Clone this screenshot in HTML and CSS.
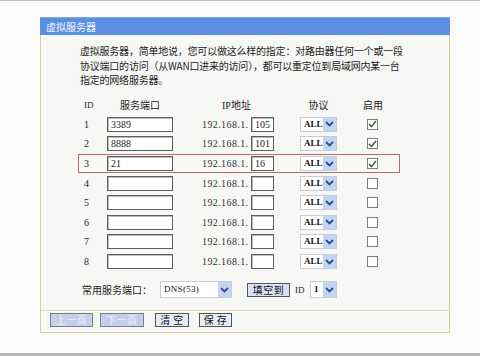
FILE: index.html
```html
<!DOCTYPE html>
<html lang="zh">
<head>
<meta charset="utf-8">
<link rel="stylesheet" href="styles.css">
</head>
<body>
<div class="page">
  <div class="panel">
    <div class="title">虚拟服务器</div>
    <div class="body">
      <p class="intro">虚拟服务器，简单地说，您可以做这么样的指定：对路由器任何一个或一段<br>协议端口的访问（从WAN口进来的访问），都可以重定位到局域网内某一台<br>指定的网络服务器。</p>
      <div class="table">
        <div class="row head">
          <span class="c-id">ID</span>
          <span class="c-port">服务端口</span>
          <span class="c-ip">IP地址</span>
          <span class="c-proto">协议</span>
          <span class="c-en">启用</span>
        </div>
        <div class="row"><span class="c-id num">1</span><span class="in port">3389</span><span class="pre">192.168.1.</span><span class="in ip">105</span><span class="sel"><span class="v">ALL</span><span class="arr"><svg width="9" height="6" viewBox="0 0 9 6"><path d="M1 1 L4.5 4.5 L8 1" fill="none" stroke="#2b4f8c" stroke-width="1.8"/></svg></span></span><span class="cb on"><svg width="9" height="8" viewBox="0 0 9 8"><path d="M1 4 L3.5 6.5 L8 1" fill="none" stroke="#3f6a3f" stroke-width="1.6"/></svg></span></div>
        <div class="row"><span class="c-id num">2</span><span class="in port">8888</span><span class="pre">192.168.1.</span><span class="in ip">101</span><span class="sel"><span class="v">ALL</span><span class="arr"><svg width="9" height="6" viewBox="0 0 9 6"><path d="M1 1 L4.5 4.5 L8 1" fill="none" stroke="#2b4f8c" stroke-width="1.8"/></svg></span></span><span class="cb on"><svg width="9" height="8" viewBox="0 0 9 8"><path d="M1 4 L3.5 6.5 L8 1" fill="none" stroke="#3f6a3f" stroke-width="1.6"/></svg></span></div>
        <div class="row mark"><span class="c-id num">3</span><span class="in port">21</span><span class="pre">192.168.1.</span><span class="in ip">16</span><span class="sel"><span class="v">ALL</span><span class="arr"><svg width="9" height="6" viewBox="0 0 9 6"><path d="M1 1 L4.5 4.5 L8 1" fill="none" stroke="#2b4f8c" stroke-width="1.8"/></svg></span></span><span class="cb on"><svg width="9" height="8" viewBox="0 0 9 8"><path d="M1 4 L3.5 6.5 L8 1" fill="none" stroke="#3f6a3f" stroke-width="1.6"/></svg></span></div>
        <div class="row"><span class="c-id num">4</span><span class="in port"></span><span class="pre">192.168.1.</span><span class="in ip"></span><span class="sel"><span class="v">ALL</span><span class="arr"><svg width="9" height="6" viewBox="0 0 9 6"><path d="M1 1 L4.5 4.5 L8 1" fill="none" stroke="#2b4f8c" stroke-width="1.8"/></svg></span></span><span class="cb"></span></div>
        <div class="row"><span class="c-id num">5</span><span class="in port"></span><span class="pre">192.168.1.</span><span class="in ip"></span><span class="sel"><span class="v">ALL</span><span class="arr"><svg width="9" height="6" viewBox="0 0 9 6"><path d="M1 1 L4.5 4.5 L8 1" fill="none" stroke="#2b4f8c" stroke-width="1.8"/></svg></span></span><span class="cb"></span></div>
        <div class="row"><span class="c-id num">6</span><span class="in port"></span><span class="pre">192.168.1.</span><span class="in ip"></span><span class="sel"><span class="v">ALL</span><span class="arr"><svg width="9" height="6" viewBox="0 0 9 6"><path d="M1 1 L4.5 4.5 L8 1" fill="none" stroke="#2b4f8c" stroke-width="1.8"/></svg></span></span><span class="cb"></span></div>
        <div class="row"><span class="c-id num">7</span><span class="in port"></span><span class="pre">192.168.1.</span><span class="in ip"></span><span class="sel"><span class="v">ALL</span><span class="arr"><svg width="9" height="6" viewBox="0 0 9 6"><path d="M1 1 L4.5 4.5 L8 1" fill="none" stroke="#2b4f8c" stroke-width="1.8"/></svg></span></span><span class="cb"></span></div>
        <div class="row"><span class="c-id num">8</span><span class="in port"></span><span class="pre">192.168.1.</span><span class="in ip"></span><span class="sel"><span class="v">ALL</span><span class="arr"><svg width="9" height="6" viewBox="0 0 9 6"><path d="M1 1 L4.5 4.5 L8 1" fill="none" stroke="#2b4f8c" stroke-width="1.8"/></svg></span></span><span class="cb"></span></div>
      </div>
      <div class="common">
        <span class="lbl">常用服务端口：</span>
        <span class="sel wide"><span class="v">DNS(53)</span><span class="arr"><svg width="9" height="6" viewBox="0 0 9 6"><path d="M1 1 L4.5 4.5 L8 1" fill="none" stroke="#2b4f8c" stroke-width="1.8"/></svg></span></span>
        <span class="btn fill">填空到</span>
        <span class="idl">ID</span>
        <span class="sel small"><span class="v">1</span><span class="arr"><svg width="9" height="6" viewBox="0 0 9 6"><path d="M1 1 L4.5 4.5 L8 1" fill="none" stroke="#2b4f8c" stroke-width="1.8"/></svg></span></span>
      </div>
    </div>
    <div class="foot">
      <span class="btn dis b1">上一页</span>
      <span class="btn dis b2">下一页</span>
      <span class="btn b3">清 空</span>
      <span class="btn b4">保 存</span>
    </div>
  </div>
</div>
</body>
</html>
```
FILE: styles.css
```css
html, body {
  margin: 0;
  padding: 0;
}
body {
  width: 480px;
  height: 356px;
  overflow: hidden;
  background: #fbfbfb;
  font-family: "Noto Sans CJK SC", "Noto Sans", sans-serif;
  color: #1e1e1e;
}
.page {
  box-sizing: border-box;
  height: 356px;
  border-top: 1px solid #bdbdbd;
  border-bottom: 3px solid #b8b8b8;
  padding-top: 16px;
}
.panel {
  margin-left: 40px;
  width: 410px;
  box-sizing: border-box;
  border-left: 1px solid #d9cda6;
  border-right: 1px solid #d9cda6;
  border-bottom: 1px solid #d9cda6;
  background: #f7f7f6;
}
.title {
  height: 18px;
  margin: 0 -1px;
  background: #5c8fe2;
  border-top: 1px solid #7fa8ec;
  box-sizing: border-box;
  color: #f2f6ff;
  font-size: 10px;
  line-height: 17px;
  padding-left: 6px;
}
.body {
  padding: 9px 0 0 0;
}
.intro {
  margin: 0 0 0 39px;
  font-size: 10px;
  line-height: 14.5px;
  letter-spacing: -0.22px;
}
.table {
  margin: 7.5px 0 0 37px;
  width: 322px;
}
.row {
  display: grid;
  grid-template-columns: 29px 66px 29px 49px 23px 26px 37px 30px 13px 20px;
  height: 19.6px;
  align-items: center;
  font-size: 10px;
  box-sizing: border-box;
}
.row.mark {
  outline: 1px solid #b86a6a;
  outline-offset: -1px;
}
.head span {
  white-space: nowrap;
}
.c-id {
  grid-column: 1;
  padding-left: 6px;
  font-family: "Liberation Serif", serif;
}
.head .c-id {
  font-size: 9px;
}
.c-port {
  grid-column: 2;
  justify-self: center;
}
.c-ip {
  grid-column: 4 / 7;
  justify-self: start;
  margin-left: 20px;
  font-family: "Liberation Serif", "Noto Sans CJK SC", serif;
}
.c-proto {
  grid-column: 7;
  justify-self: center;
}
.c-en {
  grid-column: 8 / 11;
  justify-self: start;
  margin-left: 26px;
}
.num {
  font-size: 10px;
}
.in {
  box-sizing: border-box;
  height: 15px;
  background: #fff;
  border: 1px solid #5e5e5e;
  box-shadow: inset 1px 1px 0 #b9b9b9;
  font-family: "Liberation Serif", serif;
  font-size: 10px;
  line-height: 13px;
  padding-left: 3px;
}
.port {
  grid-column: 2;
}
.ip {
  grid-column: 5;
}
.pre {
  grid-column: 4;
  font-family: "Liberation Serif", serif;
  font-size: 10px;
  letter-spacing: 0.4px;
  color: #333;
}
.sel {
  grid-column: 7;
  box-sizing: border-box;
  height: 15px;
  display: flex;
  background: #fff;
  border: 1px solid #c4cdda;
}
.sel .v {
  flex: 1;
  font-family: "Liberation Serif", serif;
  font-size: 9px;
  font-weight: bold;
  line-height: 13px;
  padding-left: 3px;
  color: #111;
}
.sel .arr {
  width: 13px;
  background: #c3d5f0;
  display: flex;
  align-items: center;
  justify-content: center;
}
.cb {
  grid-column: 9;
  box-sizing: border-box;
  width: 11px;
  height: 11px;
  border: 1px solid #7c7c7c;
  background: #fff;
  display: flex;
  align-items: center;
  justify-content: center;
}
.common {
  display: flex;
  align-items: center;
  height: 20px;
  margin: 8.5px 0 0 41px;
  font-size: 10px;
}
.lbl {
  width: 78px;
}
.sel.wide {
  width: 72px;
  height: 17px;
}
.sel.wide .v {
  font-weight: normal;
  line-height: 15px;
  letter-spacing: 0.3px;
}
.sel.small {
  width: 27px;
  height: 17px;
}
.sel.small .v {
  line-height: 15px;
}
.btn {
  box-sizing: border-box;
  height: 14px;
  display: inline-flex;
  align-items: center;
  justify-content: center;
  border: 1px solid #555;
  background: #e6ecf7;
  font-size: 10px;
  color: #111;
  letter-spacing: 0.5px;
}
.fill {
  width: 43px;
  margin-left: 15px;
  background: #d9e2f4;
}
.idl {
  margin-left: 5px;
  width: 15px;
  font-family: "Liberation Serif", serif;
  font-size: 9px;
}
.foot {
  margin-top: 10px;
  border-top: 1px solid #e3dbb9;
  padding: 2px 0 5px 9px;
  display: flex;
}
.dis {
  background: #c5cfe9;
  color: #eef1f9;
  border-color: #7a7f8c;
}
.b1 { width: 43px; }
.b2 { width: 44px; margin-left: 7px; }
.b3 { width: 34px; margin-left: 11px; }
.b4 { width: 33px; margin-left: 10px; }
```
